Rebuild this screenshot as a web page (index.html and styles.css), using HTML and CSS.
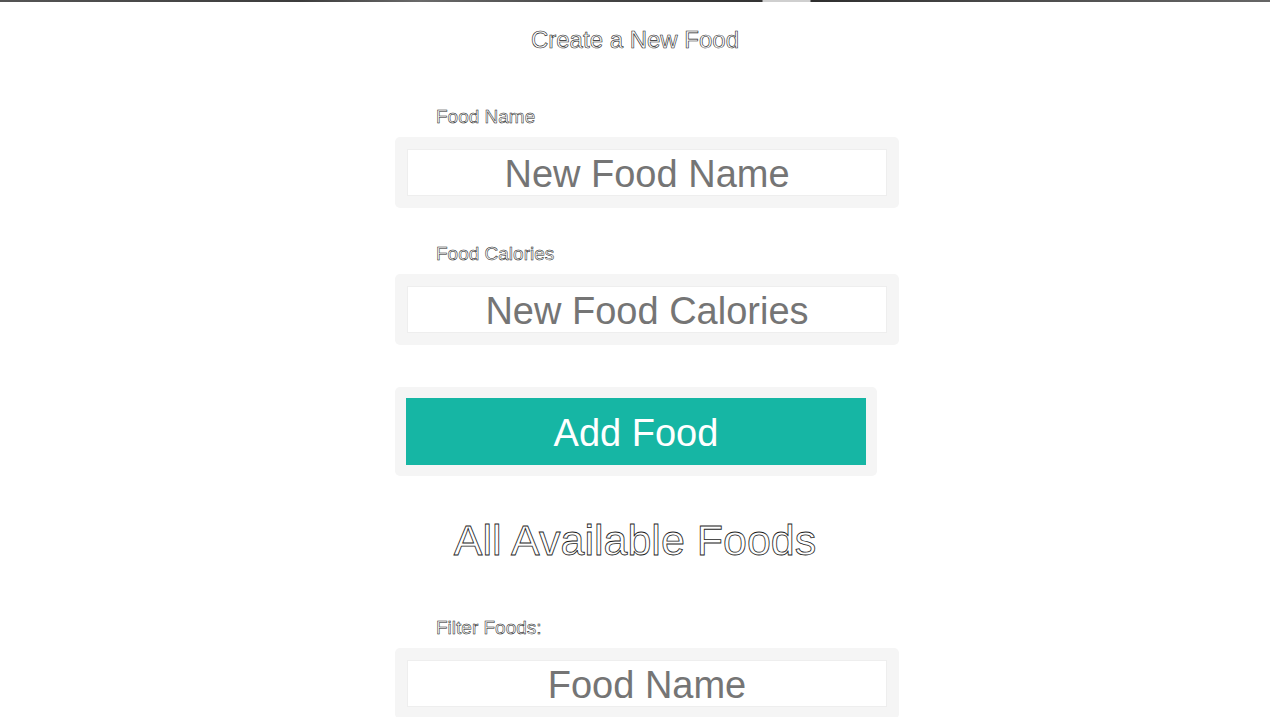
FILE: index.html
```html
<!DOCTYPE html>
<html lang="en">
<head>
    <meta charset="UTF-8">
    <meta name="viewport" content="width=device-width, initial-scale=1.0">
    <title>Foods</title>
    <link rel="stylesheet" href="styles.css">
</head>
<body>
    <div class="top-bar"></div>

    <h2 class="title">Create a New Food</h2>

    <div class="column">
        <label class="field-label" for="food-name">Food Name</label>
        <div class="input-wrap">
            <input id="food-name" type="text" placeholder="New Food Name">
        </div>

        <label class="field-label" for="food-calories">Food Calories</label>
        <div class="input-wrap">
            <input id="food-calories" type="text" placeholder="New Food Calories">
        </div>

        <div class="button-wrap">
            <button id="add-food">Add Food</button>
        </div>
    </div>

    <h1 class="list-title">All Available Foods</h1>

    <div class="column">
        <label class="field-label" for="filter">Filter Foods:</label>
        <div class="input-wrap">
            <input id="filter" type="text" placeholder="Food Name">
        </div>
    </div>
</body>
</html>
```

FILE: styles.css
```css
/* Page basics */
body {
    margin: 0;
    padding: 0;
    font-family: 'Liberation Sans', Arial, sans-serif;
    background-color: #fff;
    color: #222;
}

.top-bar {
    height: 2px;
    background: linear-gradient(to right,
        #555 0, #3c3c3c 300px, #6a6a6a 420px, #444 600px,
        #333 762px, #cfcfcf 763px, #cfcfcf 810px, #2e2e2e 811px,
        #4a4a4a 1000px, #666 1270px);
}

/* Hollow headings */
.title,
.list-title,
.field-label {
    color: #fff;
    font-weight: normal;
}

.title {
    -webkit-text-stroke: 0.6px #1c1c1c;
    font-size: 24px;
    line-height: 28px;
    text-align: center;
    margin: 24px 0 50px;
}

.list-title {
    -webkit-text-stroke: 0.8px #1c1c1c;
    font-size: 43px;
    line-height: 48px;
    text-align: center;
    margin: 40px 0 51px;
}

.column {
    width: 480px;
    margin: 0 auto;
}

.field-label {
    display: block;
    -webkit-text-stroke: 0.5px #111;
    font-size: 19px;
    line-height: 22px;
    padding: 2px 0 0 41px;
    margin-bottom: 9px;
}

.input-wrap {
    width: 480px;
    padding: 12px;
    background-color: #f5f5f5;
    border-radius: 5px;
    margin-bottom: 33px;
}

.input-wrap input {
    display: block;
    width: 100%;
    height: 47px;
    box-sizing: border-box;
    border: 1px solid #eee;
    background-color: #fff;
    font-family: 'Liberation Sans', Arial, sans-serif;
    font-size: 38px;
    color: #333;
    text-align: center;
    padding: 4px 0 0;
    outline: none;
}

.input-wrap input::placeholder {
    color: #757575;
}

.button-wrap {
    width: 460px;
    padding: 11px;
    margin-top: 42px;
    background-color: #f5f5f5;
    border-radius: 5px;
}

button {
    display: block;
    width: 100%;
    height: 67px;
    border: none;
    background-color: #16b6a4;
    color: #fff;
    font-family: 'Liberation Sans', Arial, sans-serif;
    font-size: 38px;
    padding: 4px 0 0;
    cursor: pointer;
}
```
